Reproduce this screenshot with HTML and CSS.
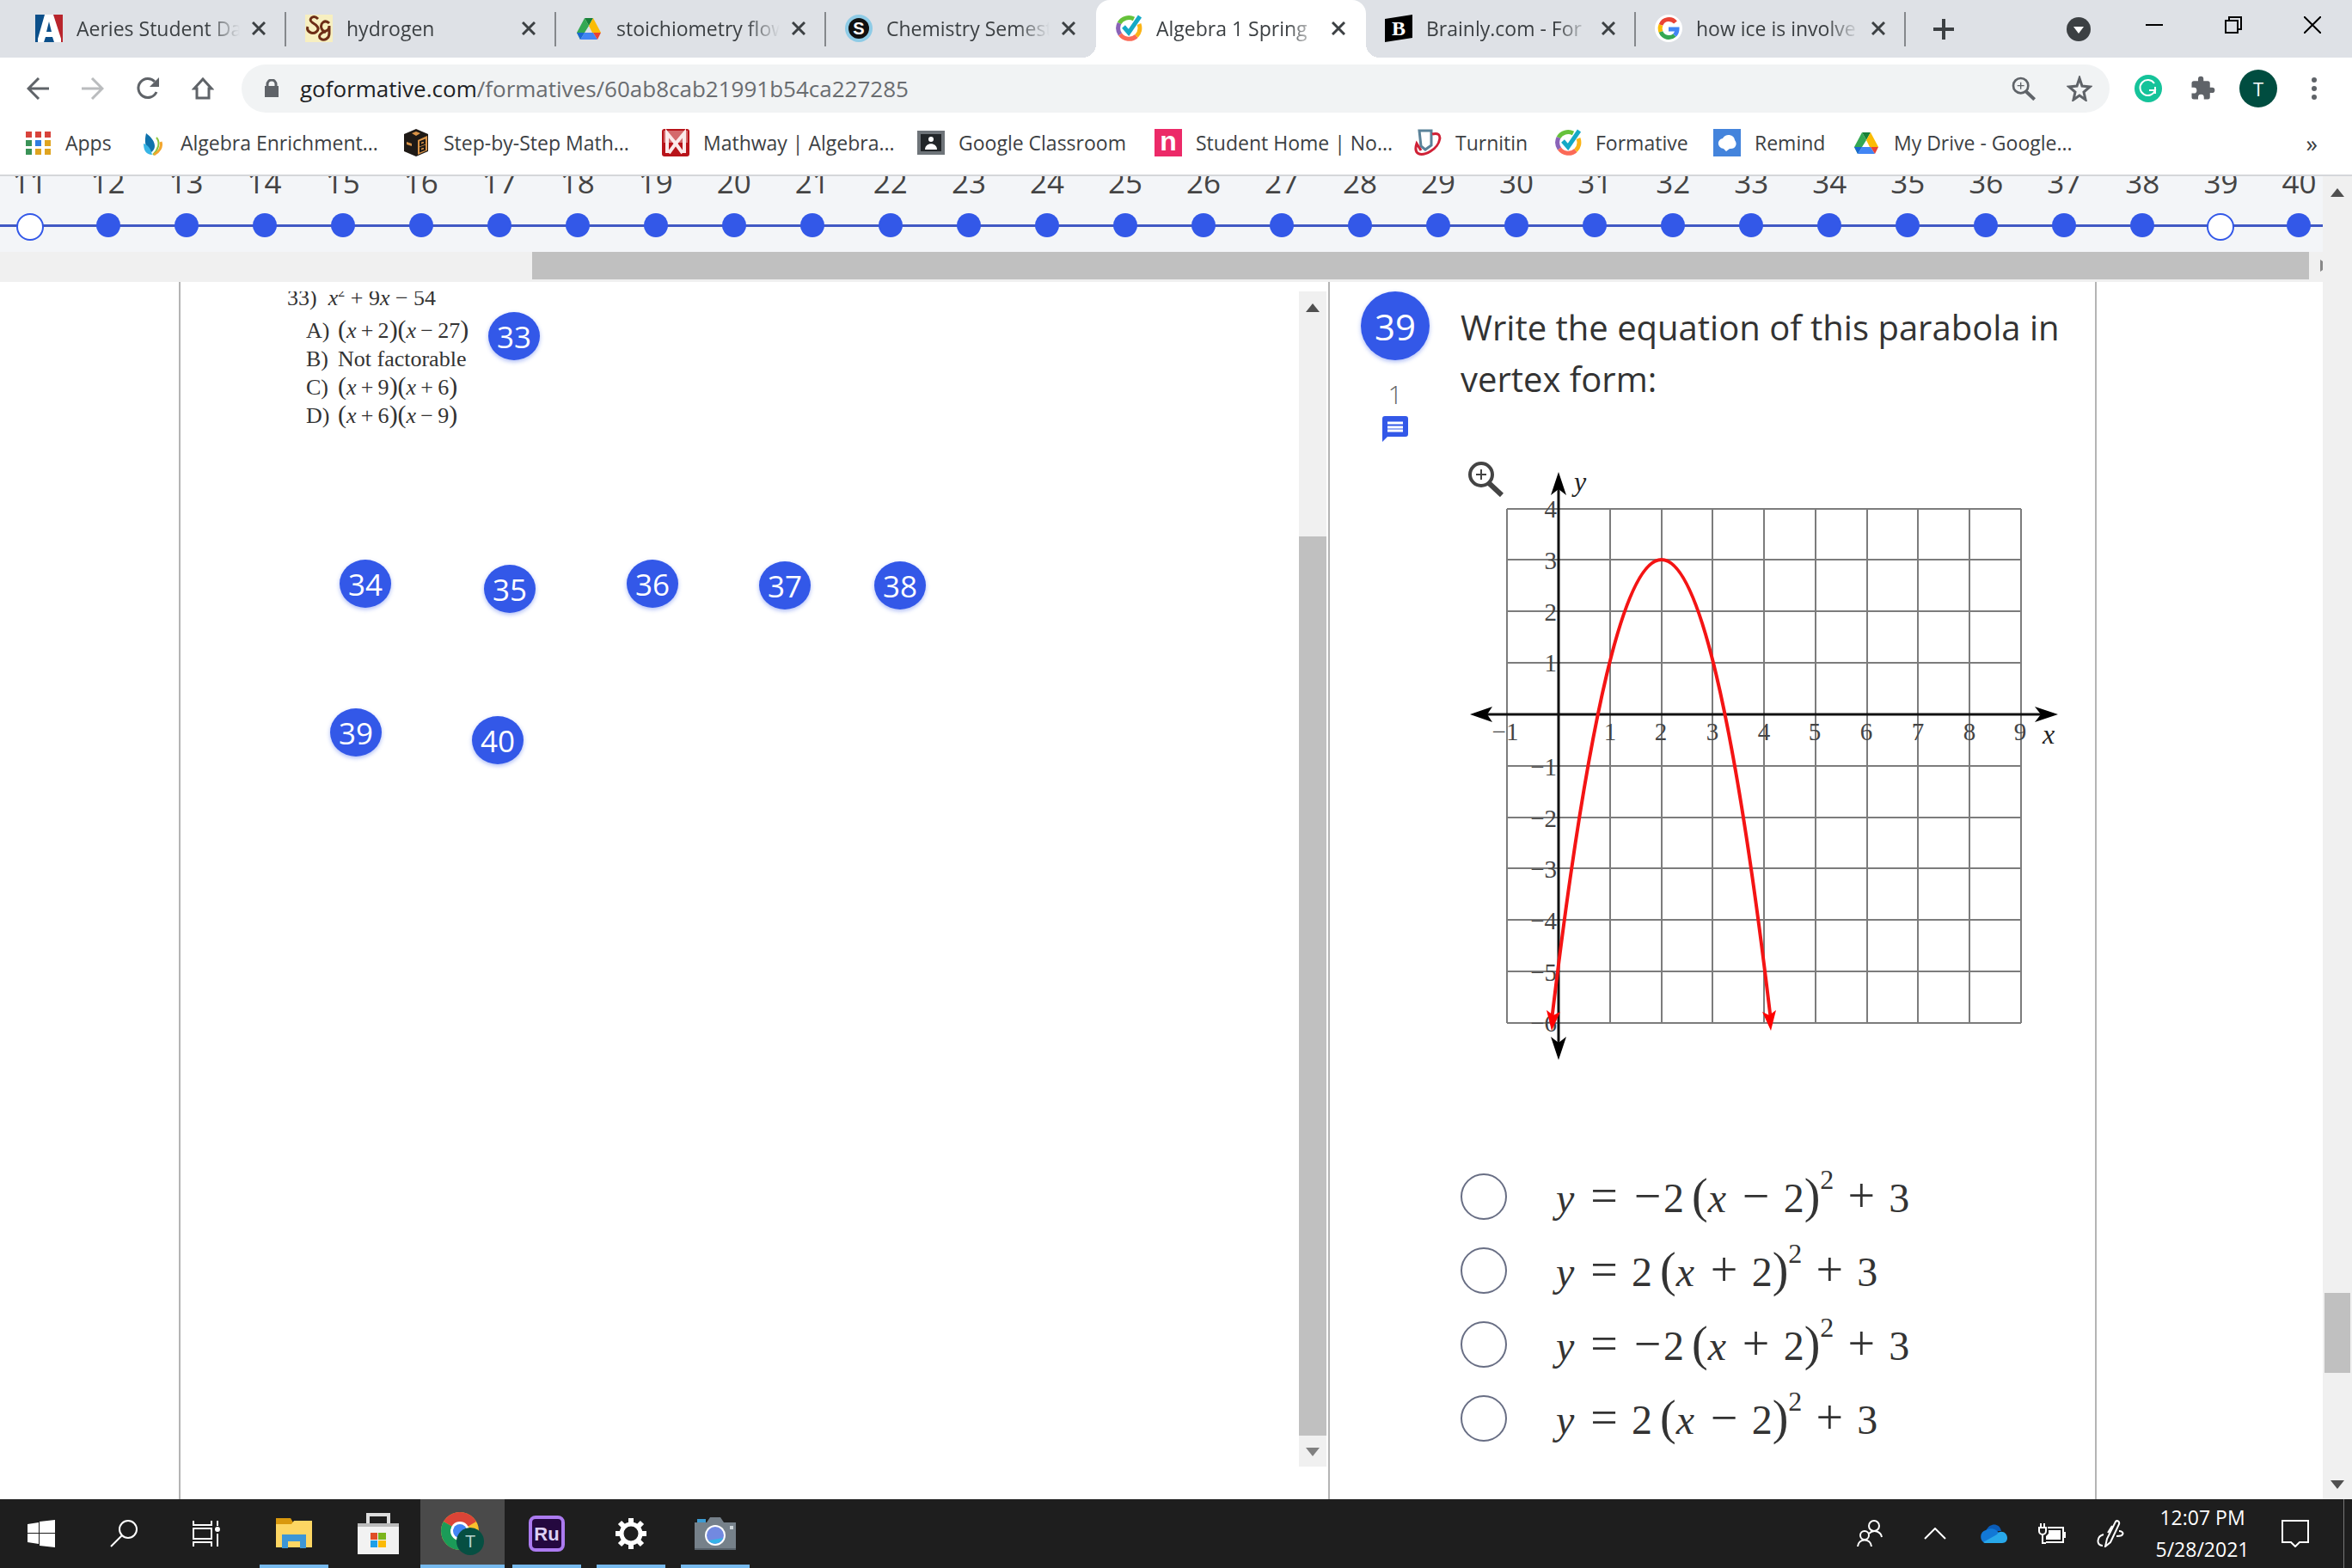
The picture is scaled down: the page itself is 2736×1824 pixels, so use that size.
FILE: index.html
```html
<!DOCTYPE html>
<html lang="en">
<head>
<meta charset="utf-8">
<title>Algebra 1 Spring</title>
<link rel="stylesheet" href="styles.css">
</head>
<body>
<svg class="defs" aria-hidden="true">
  <symbol id="close" viewBox="0 0 16 16"><path d="M1 1l14 14M15 1L1 15" stroke="#3c4043" stroke-width="3" fill="none"/></symbol>
  <symbol id="drive" viewBox="0 0 32 32">
    <path d="M11 4h10l-5 9z" fill="#188038"/><path d="M11 4L2 21l4 8 10-16z" fill="#34a853"/>
    <path d="M21 4l9 17H20L16 13z" fill="#fbbc04"/><path d="M2 21h9l-5 8z" fill="#1967d2"/>
    <path d="M11 21h10l5 8H6z" fill="#4285f4"/><path d="M21 21h9l-4 8z" fill="#ea4335"/>
  </symbol>
  <symbol id="formative" viewBox="0 0 32 32">
    <g fill="none" stroke-width="5"><path d="M5 10a13 13 0 0 1 17-5" stroke="#66c23a"/><path d="M6 23A13 13 0 0 1 5 10" stroke="#8a63b8"/><path d="M25 25a13 13 0 0 1-19-2" stroke="#fb6a57"/><path d="M28 11a13 13 0 0 1-3 14" stroke="#fbb416"/><path d="M10 14l6 7L29 2" stroke="#14a9c6"/></g>
  </symbol>
  <symbol id="zoom" viewBox="0 0 42 42"><circle cx="16" cy="16" r="13" fill="none" stroke="currentColor" stroke-width="4"/><path d="M25 26l15 14" stroke="currentColor" stroke-width="6"/><path d="M16 10v12M10 16h12" stroke="currentColor" stroke-width="2"/></symbol>
</svg>

<header class="browser">
  <div class="tabstrip">
    <div class="tab"><svg class="icon" viewBox="0 0 32 32"><path d="M0 0h32v32H0z" fill="#0b4f8a"/><path d="M21 0h11v32h-3z" fill="#b9252c"/><path d="M11 0h10l9 28v4h-8l-2-6h-8l-2 6H3v-4z" fill="#fff"/><path d="M16 8l3 12h-6z" fill="#0b4f8a"/></svg><span class="tab-title">Aeries Student Da</span><button class="tab-close" aria-label="Close tab"><svg viewBox="0 0 16 16"><use href="#close"/></svg></button></div>
    <div class="tab"><svg class="icon" viewBox="0 0 32 32"><path fill="#f7efc0" d="M0 0h32v32H0z"/><g fill="none" stroke="#6d2d16" stroke-width="3"><path d="M15 5C9-1 3 6 8 9s10 7 5 11S1 19 3 14"/><path d="M28 10c-5-5-11 0-9 6s9 3 9-3v9c0 6-6 9-10 6s1-8 6-8"/></g></svg><span class="tab-title">hydrogen</span><button class="tab-close" aria-label="Close tab"><svg viewBox="0 0 16 16"><use href="#close"/></svg></button></div>
    <div class="tab"><svg class="icon"><use href="#drive"/></svg><span class="tab-title">stoichiometry flow</span><button class="tab-close" aria-label="Close tab"><svg viewBox="0 0 16 16"><use href="#close"/></svg></button></div>
    <div class="tab bare"><svg class="icon" viewBox="0 0 32 32"><circle cx="16" cy="16" r="16" fill="#8ecbe6"/><circle cx="16" cy="16" r="12" fill="#111"/><text x="16" y="23" text-anchor="middle" class="mark" font-size="20" fill="#fff">S</text></svg><span class="tab-title">Chemistry Semest</span><button class="tab-close" aria-label="Close tab"><svg viewBox="0 0 16 16"><use href="#close"/></svg></button></div>
    <div class="tab bare active"><svg class="icon"><use href="#formative"/></svg><span class="tab-title">Algebra 1 Spring</span><button class="tab-close" aria-label="Close tab"><svg viewBox="0 0 16 16"><use href="#close"/></svg></button></div>
    <div class="tab"><svg class="icon" viewBox="0 0 32 32"><path d="M0 5l32-5v27L0 32z"/><text x="16" y="24" text-anchor="middle" class="mark slab" font-size="24" fill="#fff">B</text></svg><span class="tab-title">Brainly.com - For</span><button class="tab-close" aria-label="Close tab"><svg viewBox="0 0 16 16"><use href="#close"/></svg></button></div>
    <div class="tab"><svg class="icon" viewBox="0 0 32 32"><circle cx="16" cy="16" r="16" fill="#fff"/><g fill="none" stroke-width="5"><path d="M24 9A10 10 0 0 0 7 12" stroke="#ea4335"/><path d="M7 12a10 10 0 0 0 0 8" stroke="#fbbc05"/><path d="M7 20a10 10 0 0 0 16 4" stroke="#34a853"/><path d="M23 24a10 10 0 0 0 3-7H16" stroke="#4285f4"/></g></svg><span class="tab-title">how ice is involve</span><button class="tab-close" aria-label="Close tab"><svg viewBox="0 0 16 16"><use href="#close"/></svg></button></div>
    <button class="newtab" aria-label="New tab"><svg viewBox="0 0 24 24" width="24" height="24"><path d="M12 0v24M0 12h24" stroke="#3c4043" stroke-width="4"/></svg></button>
    <div class="window-controls">
      <button aria-label="Search tabs"><svg width="28" height="28" viewBox="0 0 28 28"><circle cx="14" cy="14" r="14" fill="#3c4043"/><path d="M8 11h12l-6 8z" fill="#fff"/></svg></button>
      <button aria-label="Minimize"><svg width="20" height="20" viewBox="0 0 20 20"><path d="M0 10h20" stroke="#000" stroke-width="2"/></svg></button>
      <button aria-label="Restore"><svg width="20" height="20" viewBox="0 0 20 20"><path d="M1 5h14v14H1zM5 5V1h14v14h-4" fill="none" stroke="#000" stroke-width="2"/></svg></button>
      <button aria-label="Close"><svg width="20" height="20" viewBox="0 0 20 20"><path d="M0 0l20 20M20 0L0 20" stroke="#000" stroke-width="2"/></svg></button>
    </div>
  </div>

  <div class="toolbar">
    <button class="nav" aria-label="Back"><svg width="26" height="26" viewBox="0 0 26 26"><path d="M26 13H3M14 1L2 13l12 12" fill="none" stroke="#5f6368" stroke-width="3"/></svg></button>
    <button class="nav" aria-label="Forward"><svg width="26" height="26" viewBox="0 0 26 26"><path d="M0 13h23M12 1l12 12-12 12" fill="none" stroke="#babcbe" stroke-width="3"/></svg></button>
    <button class="nav" aria-label="Reload"><svg width="28" height="28" viewBox="0 0 28 28"><path d="M24 18A11 11 0 1 1 22 6" fill="none" stroke="#5f6368" stroke-width="3"/><path d="M27 1v11H16z" fill="#5f6368"/></svg></button>
    <button class="nav" aria-label="Home"><svg width="26" height="26" viewBox="0 0 26 26"><path d="M13 2L3 13h3v11h14V13h3z" fill="none" stroke="#5f6368" stroke-width="3"/></svg></button>
    <div class="omnibox">
      <svg width="18" height="22" viewBox="0 0 18 22"><path d="M1 8h16v13H1z" fill="#5f6368"/><path d="M4 8V6a5 5 0 0 1 10 0v2" fill="none" stroke="#5f6368" stroke-width="3"/></svg>
      <div class="url"><span class="host">goformative.com</span>/formatives/60ab8cab21991b54ca227285</div>
      <button aria-label="Zoom"><svg width="28" height="28" viewBox="0 0 42 42"><use href="#zoom"/></svg></button>
      <button aria-label="Bookmark this page"><svg width="30" height="30" viewBox="0 0 30 30"><path d="M15 3l3 9 9 1-7 6 2 9-7-5-7 5 2-9-7-6 9-1z" fill="none" stroke="#5f6368" stroke-width="3"/></svg></button>
    </div>
    <div class="extensions">
      <button aria-label="Grammarly"><svg width="32" height="32" viewBox="0 0 32 32"><circle cx="16" cy="16" r="16" fill="#15c39a"/><path d="M23 10a9 9 0 1 0 1 8h-7M24 14v8" fill="none" stroke="#fff" stroke-width="2"/></svg></button>
      <button aria-label="Extensions"><svg width="30" height="30" viewBox="0 0 24 24"><path fill="#5f6368" d="M21 11h-2V7a2 2 0 0 0-2-2h-4V3a2.500 2.500 0 0 0-5 0v2H4a2 2 0 0 0-2 2v4h2a2.700 2.700 0 0 1 0 5.400H2V20a2 2 0 0 0 2 2h4v-2a2.700 2.700 0 0 1 5.400 0v2H17a2 2 0 0 0 2-2v-4h2a2.500 2.500 0 0 0 0-5z"/></svg></button>
      <button class="avatar">T</button>
      <button aria-label="Menu"><svg width="6" height="26" viewBox="0 0 6 26" fill="#5f6368"><circle cx="3" cy="3" r="3"/><circle cx="3" cy="13" r="3"/><circle cx="3" cy="23" r="3"/></svg></button>
    </div>
  </div>

  <nav class="bookmarks">
    <a href="#"><svg class="icon" viewBox="0 0 32 32"><path fill="#d8433b" d="M2 3h7v7H2zM13 3h7v7h-7zM24 3h7v7h-7z"/><path fill="#3a9257" d="M2 13h7v7H2zM2 23h7v7H2z"/><path fill="#2f7de1" d="M13 13h7v7h-7z"/><path fill="#dfa420" d="M24 13h7v7h-7zM13 23h7v7h-7zM24 23h7v7h-7z"/></svg>Apps</a>
    <a href="#"><svg class="icon" viewBox="0 0 32 32"><path d="M8 5c12 9 12 18 6 22C6 22 6 14 8 5z" fill="#0e72ac"/><path d="M5 17c6 2 8 6 10 13-7 0-10-5-10-13z" fill="#38b5e6"/><path d="M20 10c5 6 2 14-4 20" fill="none" stroke="#8cc63f" stroke-width="2"/><path d="M25 15c2 6-2 12-8 15" fill="none" stroke="#f3a62d" stroke-width="3"/></svg>Algebra Enrichment...</a>
    <a href="#"><svg class="icon" viewBox="0 0 32 32"><path d="M16 0l14 6v20l-14 6-14-6V6z" fill="#1f1a16"/><path d="M18 13l11-5v17l-11 5zM11 5l5-2 5 2-5 3z" fill="#d99347"/><path d="M5 15l6 2v3l-6-2z" fill="#d99347"/><path d="M21 15l5-2v4l-5 2zM21 22l5-2v4l-5 2z" fill="#d99347" stroke="#1f1a16" stroke-width="2"/></svg>Step-by-Step Math...</a>
    <a href="#"><svg class="icon" viewBox="0 0 32 32"><rect width="32" height="32" rx="3" fill="#b8141a"/><path d="M2 2h28v14H2z" fill="#d46a6c"/><path d="M6 28V5l10 12L26 5v23M8 28l8-11 8 11" fill="none" stroke="#fbeaea" stroke-width="4"/></svg>Mathway | Algebra...</a>
    <a href="#"><svg class="icon" viewBox="0 0 32 32"><path fill="#6e7479" d="M0 2h32v28H0z"/><path fill="#222629" d="M4 6h24v20H4z"/><circle cx="16" cy="12" r="3" fill="#fff"/><path d="M9 24c0-9 14-9 14 0z" fill="#fff"/></svg>Google Classroom</a>
    <a href="#"><svg class="icon" viewBox="0 0 32 32"><path fill="#ec2a68" d="M0 0h32v32H0z"/><text x="16" y="25" text-anchor="middle" class="mark" font-size="32" fill="#fff">n</text></svg>Student Home | No...</a>
    <a href="#"><svg class="icon" viewBox="0 0 32 32"><path d="M6 2h14v17l-7 5-5-4z" fill="none" stroke="#5a8299" stroke-width="3"/><path d="M21 6c14-4 10 13-2 20S-1 29 3 17l5 8" fill="none" stroke="#cf2136" stroke-width="3"/></svg>Turnitin</a>
    <a href="#"><svg class="icon"><use href="#formative"/></svg>Formative</a>
    <a href="#"><svg class="icon" viewBox="0 0 32 32"><path fill="#4484dc" d="M0 0h32v32H0z"/><path d="M12 23c-8-1-8-11-1-12 3-6 13-5 14 2 4 5 0 11-6 10l-4 3z" fill="#fff"/></svg>Remind</a>
    <a href="#"><svg class="icon"><use href="#drive"/></svg>My Drive - Google...</a>
    <button class="more" aria-label="More bookmarks">»</button>
  </nav>
</header>

<main class="page">
  <div class="content">
    <ol class="progress">
      <li class="open">11</li><li>12</li><li>13</li><li>14</li><li>15</li><li>16</li><li>17</li><li>18</li><li>19</li><li>20</li><li>21</li><li>22</li><li>23</li><li>24</li><li>25</li><li>26</li><li>27</li><li>28</li><li>29</li><li>30</li><li>31</li><li>32</li><li>33</li><li>34</li><li>35</li><li>36</li><li>37</li><li>38</li><li class="open">39</li><li>40</li>
    </ol>
    <div class="hscroll"><div class="hthumb"></div><svg width="3" height="14" viewBox="0 0 3 14"><path d="M0 0l3 2v10l-3 2z" fill="#888"/></svg></div>

    <div class="panels">
      <section class="worksheet">
        <div class="sheet">
          <div class="problem">
            <p class="stem">33)&nbsp; <i>x</i><sup>2</sup> + 9<i>x</i> − 54</p>
            <dl>
              <dt>A)</dt><dd><b>(</b><i>x</i>&thinsp;+&thinsp;2<b>)(</b><i>x</i>&thinsp;−&thinsp;27<b>)</b></dd>
              <dt>B)</dt><dd>Not factorable</dd>
              <dt>C)</dt><dd><b>(</b><i>x</i>&thinsp;+&thinsp;9<b>)(</b><i>x</i>&thinsp;+&thinsp;6<b>)</b></dd>
              <dt>D)</dt><dd><b>(</b><i>x</i>&thinsp;+&thinsp;6<b>)(</b><i>x</i>&thinsp;−&thinsp;9<b>)</b></dd>
            </dl>
          </div>
          <button class="pin p33">33</button>
          <button class="pin p34">34</button>
          <button class="pin p35">35</button>
          <button class="pin p36">36</button>
          <button class="pin p37">37</button>
          <button class="pin p38">38</button>
          <button class="pin p39">39</button>
          <button class="pin p40">40</button>
        </div>
        <div class="vscroll inner">
          <svg width="16" height="10" viewBox="0 0 16 10"><path d="M0 10L8 0l8 10z" fill="#505050"/></svg>
          <div class="space-inner"></div><div class="thumb-inner"></div>
          <svg width="16" height="10" viewBox="0 0 16 10"><path d="M0 0h16L8 10z" fill="#808080"/></svg>
        </div>
      </section>

      <section class="question">
        <div class="meta">
          <span class="badge">39</span>
          <span class="points">1</span>
          <button aria-label="Comments"><svg width="30" height="30" viewBox="0 0 30 30"><path d="M3 0h24a3 3 0 0 1 3 3v18a3 3 0 0 1-3 3H6l-6 6V3a3 3 0 0 1 3-3z" fill="#3358e8"/><path d="M6 8h18M6 13h18M6 17h18" stroke="#fff" stroke-width="3"/></svg></button>
        </div>
        <div class="body">
          <h1>Write the equation of this parabola in vertex form:</h1>
          <svg class="graph" viewBox="0 0 710 710" role="img" aria-label="Graph of a downward parabola with vertex (2, 3)">
            <g class="grid">
              <path d="M54 53v598M114 53v598M174 53v598M234 53v598M293 53v598M353 53v598M413 53v598M473 53v598M532 53v598M592 53v598M652 53v598"/>
              <path d="M54 53h598M54 112h598M54 172h598M54 232h598M54 292h598M54 352h598M54 412h598M54 471h598M54 531h598M54 591h598M54 651h598"/>
            </g>
            <path d="M114 24v660M24 292h660" stroke="#111" stroke-width="3"/>
            <path d="M114 10l9 27-9-7-9 7zM114 694l9-27-9 7-9-7zM11 292l26-9-6 9 6 9zM695 292l-27-9 7 9-7 9z"/>
            <g class="ticks" text-anchor="end">
              <text x="112" y="63">4</text><text x="112" y="123">3</text><text x="112" y="183">2</text><text x="112" y="242">1</text>
              <text x="112" y="363">−1</text><text x="112" y="423">−2</text><text x="112" y="482">−3</text><text x="112" y="542">−4</text><text x="112" y="602">−5</text><text x="112" y="661">−6</text>
            </g>
            <g class="ticks" text-anchor="middle">
              <text x="52" y="322">−1</text><text x="174" y="322">1</text><text x="233" y="322">2</text><text x="293" y="322">3</text><text x="353" y="322">4</text><text x="412" y="322">5</text><text x="472" y="322">6</text><text x="532" y="322">7</text><text x="592" y="322">8</text><text x="651" y="322">9</text>
            </g>
            <text class="axis" x="132" y="32">y</text><text class="axis" x="677" y="326">x</text>
            <path d="M106 648Q234 -424 361 648" fill="none" stroke="#f41414" stroke-width="4"/>
            <path d="M106 660l-6-24 8 6 8-4zM361 660l-10-22 8 4 8-6z" fill="#f00"/>
            <svg x="8" y="-3" width="42" height="42" viewBox="0 0 42 42" color="#444"><use href="#zoom"/></svg>
          </svg>
          <form class="choices">
            <label><input type="radio" name="answer"><span class="math"><i>y</i><span class="op">=</span><span class="neg">−</span>2<span class="paren gap">(</span><i>x</i><span class="op">−</span>2<span class="paren">)</span><sup>2</sup><span class="op">+</span>3</span></label>
            <label><input type="radio" name="answer"><span class="math"><i>y</i><span class="op">=</span>2<span class="paren gap">(</span><i>x</i><span class="op">+</span>2<span class="paren">)</span><sup>2</sup><span class="op">+</span>3</span></label>
            <label><input type="radio" name="answer"><span class="math"><i>y</i><span class="op">=</span><span class="neg">−</span>2<span class="paren gap">(</span><i>x</i><span class="op">+</span>2<span class="paren">)</span><sup>2</sup><span class="op">+</span>3</span></label>
            <label><input type="radio" name="answer"><span class="math"><i>y</i><span class="op">=</span>2<span class="paren gap">(</span><i>x</i><span class="op">−</span>2<span class="paren">)</span><sup>2</sup><span class="op">+</span>3</span></label>
          </form>
        </div>
      </section>
    </div>
  </div>
  <div class="vscroll outer">
    <svg width="16" height="10" viewBox="0 0 16 10"><path d="M0 10L8 0l8 10z" fill="#505050"/></svg>
    <div class="space-top"></div><div class="thumb"></div><div class="space-bottom"></div>
    <svg width="16" height="10" viewBox="0 0 16 10"><path d="M0 0h16L8 10z" fill="#505050"/></svg>
  </div>
</main>

<footer class="taskbar">
  <div class="system">
    <button aria-label="Start"><svg width="32" height="32" viewBox="0 0 32 32"><path d="M0 5l13-2v12H0zM14 2l18-2v15H14zM0 16h13v12L0 26zM14 16h18v16l-18-2z" fill="#fff"/></svg></button>
    <button aria-label="Search"><svg width="32" height="32" viewBox="0 0 32 32"><circle cx="21" cy="11" r="10" fill="none" stroke="#fff" stroke-width="2"/><path d="M14 18L1 31" stroke="#fff" stroke-width="2"/></svg></button>
    <button aria-label="Task view"><svg width="32" height="32" viewBox="0 0 32 32"><path d="M1 1v5h21V1M1 10h21v12H1zM1 31v-5h21v5M29 1v6M29 16v15" fill="none" stroke="#fff" stroke-width="2"/><circle cx="29" cy="11" r="3" fill="#fff"/></svg></button>
  </div>
  <div class="apps">
    <button class="running" aria-label="File Explorer"><svg width="42" height="36" viewBox="0 0 42 36"><path d="M0 0h17l3 5v5H0z" fill="#d9980d"/><path d="M0 7h18l3-4h21v31H0z" fill="#fdd663"/><path d="M7 35V19h28v16h-7v-8H14v8z" fill="#3d96d6"/></svg></button>
    <button aria-label="Microsoft Store"><svg width="48" height="48" viewBox="0 0 48 48"><path d="M12 16V2h24v14" fill="none" stroke="#ddd" stroke-width="4"/><path d="M0 12h48v36H0z" fill="#f2f2f2"/><path d="M0 12h48v4H0z" fill="#bbb"/><path fill="#e04e26" d="M15 23h8v8h-8z"/><path fill="#7bb51c" d="M24 23h9v8h-9z"/><path fill="#1e9fe8" d="M15 32h8v8h-8z"/><path fill="#fbba08" d="M24 32h9v8h-9z"/></svg></button>
    <button class="running current" aria-label="Google Chrome"><svg width="50" height="50" viewBox="0 0 50 50"><circle cx="22" cy="22" r="22" fill="#fbc02d"/><path d="M22 22L3 11a22 22 0 0 1 38 0z" fill="#dc4437"/><path d="M3 11a22 22 0 0 0 19 33l9-17z" fill="#1b9b58"/><circle cx="22" cy="22" r="11" fill="#fff"/><circle cx="22" cy="22" r="8" fill="#4285f4"/><circle cx="34" cy="34" r="16" fill="#064f42"/><text x="34" y="41" text-anchor="middle" class="mark thin" font-size="20" fill="#b8d4cf">T</text></svg></button>
    <button class="running" aria-label="Adobe Rush"><svg width="42" height="42" viewBox="0 0 42 42"><rect x="2" y="2" width="38" height="38" rx="6" fill="#24083f" stroke="#ac7bf0" stroke-width="4"/><text x="21" y="29" text-anchor="middle" class="mark" font-size="22" fill="#ddd0f5">Ru</text></svg></button>
    <button class="running" aria-label="Settings"><svg width="36" height="36" viewBox="0 0 36 36"><circle cx="18" cy="18" r="11" fill="none" stroke="#fff" stroke-width="5"/><path d="M18 0v7M18 29v7M0 18h7M29 18h7M5 5l5 5M26 26l5 5M5 31l5-5M26 10l5-5" stroke="#fff" stroke-width="6"/></svg></button>
    <button class="running" aria-label="Camera"><svg width="48" height="38" viewBox="0 0 48 38"><path d="M0 6h14l4-6h12l4 6h14v32H0z" fill="#76818a"/><path d="M0 36h48v2H0z" fill="#59636b"/><path d="M3 2h10v4H3z" fill="#3c9bd2"/><circle cx="24" cy="21" r="12" fill="#fff"/><circle cx="24" cy="21" r="10" fill="#7289e0"/><path d="M16 27a10 10 0 0 0 17-3z" fill="#35b3e8"/><path d="M41 10h4v4h-4z" fill="#cfd6da"/></svg></button>
  </div>
  <div class="tray">
    <button class="people" aria-label="People"><svg width="30" height="32" viewBox="0 0 30 32"><g fill="none" stroke="#fff" stroke-width="2"><circle cx="20" cy="7" r="6"/><circle cx="9" cy="18" r="5"/><path d="M1 31c1-10 15-10 16 0M14 16c6-6 14-2 15 4"/></g></svg></button>
    <button aria-label="Show hidden icons"><svg width="26" height="14" viewBox="0 0 26 14"><path d="M1 13L13 1l12 12" fill="none" stroke="#fff" stroke-width="2"/></svg></button>
    <button aria-label="OneDrive"><svg width="32" height="22" viewBox="0 0 32 22"><path d="M7 8c4-10 16-10 18 0z" fill="#0a5cb8"/><path d="M6 22A8 8 0 0 1 7 7c8-4 14 0 16 5l-9 10z" fill="#1278d6"/><path d="M4 21l16-9c3-6 12-3 12 4 0 3-2 6-6 6H6z" fill="#28a8ea"/></svg></button>
    <button aria-label="Battery"><svg width="32" height="24" viewBox="0 0 32 24"><g fill="none" stroke="#fff" stroke-width="2"><path d="M3 0v5M7 0v5M1 5h8v4a4 4 0 0 1-8 0zM5 13v10h4M11 5h18v17H9"/></g><path d="M12 8h14v11H9v-4l3-3zM30 10h2v7h-2z" fill="#fff"/></svg></button>
    <button aria-label="Windows Ink"><svg width="32" height="32" viewBox="0 0 32 32"><g fill="none" stroke="#fff" stroke-width="2"><path d="M10 31l2-9L22 2c2-2 5 0 4 3L16 26zM18 7l-5 8M8 17c-8 2-9 13-1 13M26 13c6 0 7 6-3 6"/></g></svg></button>
    <div class="clock"><time>12:07 PM</time><time>5/28/2021</time></div>
    <button class="notices" aria-label="Notifications"><svg width="32" height="32" viewBox="0 0 32 32"><path d="M1 1h30v25H21l-5 5-5-5H1z" fill="none" stroke="#fff" stroke-width="2"/></svg></button>
  </div>
</footer>
</body>
</html>
```
FILE: styles.css
```css
* { box-sizing: border-box; }
body {
  margin: 0;
  min-height: 100vh;
  display: flex;
  flex-direction: column;
  font-family: "Open Sans", "Noto Sans", sans-serif;
  background: #fff;
  color: #3c4043;
}
button {
  margin: 0;
  padding: 0;
  border: 0;
  background: none;
  color: inherit;
  font: inherit;
  display: flex;
  align-items: center;
  justify-content: center;
}
svg { display: block; flex: none; }
.defs { position: absolute; width: 0; height: 0; }
.icon { width: 32px; height: 32px; flex: none; }
.mark { font-family: "Liberation Sans", sans-serif; font-weight: 700; }
.slab { font-family: "Liberation Serif", serif; }
.thin { font-weight: 400; }

/* Tab strip */
.tabstrip {
  display: flex;
  height: 67px;
  padding-left: 19px;
  background: #dee1e6;
}
.tab {
  position: relative;
  width: 314px;
  flex: none;
  display: flex;
  align-items: center;
  padding: 0 24px 2px 22px;
  font-size: 23px;
}
.tab::after {
  content: "";
  position: absolute;
  right: 0;
  top: 14px;
  width: 2px;
  height: 40px;
  background: #85888c;
}
.tab.bare::after { display: none; }
.tab.active { background: #fff; border-radius: 16px 16px 0 0; }
.tab.active::before {
  content: "";
  position: absolute;
  left: -16px;
  right: -16px;
  bottom: 0;
  height: 16px;
  background:
    radial-gradient(circle at 0 0, #dee1e6 16px, #fff 16px) left / 16px 16px no-repeat,
    radial-gradient(circle at 100% 0, #dee1e6 16px, #fff 16px) right / 16px 16px no-repeat;
}
.tab-title {
  flex: 1;
  min-width: 0;
  margin: 0 14px 0 16px;
  overflow: hidden;
  white-space: nowrap;
  -webkit-mask-image: linear-gradient(to right, #000 80%, transparent);
  mask-image: linear-gradient(to right, #000 80%, transparent);
}
.tab-close svg { width: 16px; height: 16px; }
.newtab { width: 88px; }
.window-controls { margin-left: auto; display: flex; }
.window-controls button { width: 92px; padding-bottom: 10px; }
.window-controls button:first-child { width: 84px; padding-bottom: 0; }

/* Address row */
.toolbar { display: flex; align-items: center; height: 72px; padding: 0 41px 0 12px; }
.nav { width: 64px; height: 64px; }
.omnibox {
  flex: 1;
  height: 56px;
  margin-left: 13px;
  padding: 0 20px 0 26px;
  border-radius: 28px;
  background: #f1f3f4;
  color: #5f6368;
  display: flex;
  align-items: center;
  gap: 36px;
}
.url { flex: 1; margin-left: -12px; font-size: 26px; color: #696c70; }
.host { color: #202124; }
.extensions { display: flex; align-items: center; gap: 32px; margin-left: 29px; }
.extensions button:last-child { margin-left: 8px; }
.avatar {
  width: 44px;
  height: 44px;
  margin-left: -4px;
  border-radius: 50%;
  background: #004d40;
  color: #fff;
  font-size: 22px;
}

/* Bookmarks */
.bookmarks {
  display: grid;
  grid-template-columns: 134px 306px 302px 297px 276px 302px 163px 185px 162px 1fr auto;
  align-items: center;
  height: 66px;
  padding: 0 40px 10px 28px;
  border-bottom: 2px solid #d5d7da;
  font-size: 23px;
}
.bookmarks a {
  display: flex;
  align-items: center;
  gap: 16px;
  color: #3c4043;
  text-decoration: none;
  white-space: nowrap;
}
.more { font-size: 27px; }

/* Page */
.page { flex: 1; display: flex; }
.content { flex: 1; min-width: 0; display: flex; flex-direction: column; overflow: hidden; }
.progress {
  list-style: none;
  margin: 0 -18px 0 -11px;
  padding: 0;
  height: 88px;
  display: flex;
  background: #f3f5f8;
  overflow: hidden;
}
.progress li {
  flex: 1;
  margin-top: -21px;
  font-size: 35px;
  line-height: 56px;
  text-align: center;
  color: #444;
  background: linear-gradient(#4058c4, #4058c4) 0 77px / 100% 3px no-repeat;
}
.progress li::after {
  content: "";
  display: block;
  width: 28px;
  height: 28px;
  margin: 8px auto 0;
  border-radius: 50%;
  background: #3358e8;
}
.progress .open::after { background: #fff; border: 2px solid #3358e8; }
.hscroll {
  display: flex;
  align-items: center;
  justify-content: space-between;
  height: 35px;
  padding: 0 0 3px 619px;
  background: #f0f0f0;
}
.hthumb { flex: 1; margin-right: 13px; height: 32px; background: #c0c0c0; }

.panels { flex: 1; display: grid; grid-template-columns: 1337fr 894fr; margin: 0 263px 0 208px; }
.worksheet {
  display: flex;
  padding: 11px 2px 38px 0;
  border-left: 2px solid #b4b4b4;
}
.sheet {
  position: relative;
  flex: 1;
  overflow: hidden;
}
.problem {
  margin: -9px 0 0 124px;
  font: 26px/33px "Liberation Serif", serif;
  color: #333;
}
.stem { margin: 0 0 5px; }
.stem sup { font-size: 16px; line-height: 0; }
.problem dl { margin: 0 0 0 22px; display: grid; grid-template-columns: 37px 1fr; }
.problem dd { margin: 0; }
.problem b { font-weight: 400; font-size: 30px; line-height: 0; }
.pin {
  position: absolute;
  width: 60px;
  height: 56px;
  border-radius: 50%;
  background: #3358e8;
  color: #fff;
  font-size: 35px;
  box-shadow: 0 2px 5px rgba(51, 88, 232, .4);
}
.p33 { left: 358px; top: 24px; }
.p34 { left: 185px; top: 312px; }
.p35 { left: 353px; top: 318px; }
.p36 { left: 519px; top: 312px; }
.p37 { left: 673px; top: 314px; }
.p38 { left: 807px; top: 314px; }
.p39 { left: 174px; top: 485px; }
.p40 { left: 339px; top: 494px; }

.vscroll { display: flex; flex-direction: column; align-items: center; background: #f0f0f0; }
.inner { width: 32px; padding: 14px 0 12px; }
.space-inner { flex: 261; }
.thumb-inner { flex: 1046; width: 100%; margin-bottom: 14px; background: #c0c0c0; }
.outer { width: 34px; padding: 14px 0 12px; }
.space-top { flex: 1275; }
.thumb { flex: 93; width: 30px; background: #c0c0c0; }
.space-bottom { flex: 125; }

.question {
  display: flex;
  align-items: flex-start;
  border: solid #b4b4b4;
  border-width: 0 2px;
}
.meta {
  width: 152px;
  padding-top: 11px;
  display: flex;
  flex-direction: column;
  align-items: center;
}
.badge {
  width: 80px;
  height: 80px;
  border-radius: 50%;
  background: #3358e8;
  color: #fff;
  font-size: 42px;
  line-height: 82px;
  text-align: center;
  box-shadow: 0 2px 5px rgba(51, 88, 232, .4);
}
.points { margin: 20px 0 5px; font-size: 30px; line-height: 40px; font-weight: 300; color: #666; }
.body { flex: 1; min-width: 0; }
h1 {
  margin: 23px 0 68px;
  padding-right: 30px;
  font-size: 40px;
  font-weight: 400;
  line-height: 60px;
  color: #333;
}
.graph { width: 710px; height: 710px; overflow: visible; }
.grid { fill: none; stroke: #7c7c7c; stroke-width: 2; }
.ticks { font: 29px "Liberation Serif", serif; fill: #444; }
.axis { font: italic 32px "Liberation Serif", serif; fill: #222; }
.choices { margin-top: 116px; display: flex; flex-direction: column; gap: 32px; }
.choices label { display: flex; align-items: center; gap: 57px; height: 54px; }
.choices input {
  appearance: none;
  width: 54px;
  height: 54px;
  margin: 0;
  border: 2px solid #686e84;
  border-radius: 50%;
}
.math {
  display: flex;
  align-items: baseline;
  font: 48px/54px "Liberation Serif", serif;
  color: #333;
}
.math i { width: 24px; }
.math .op { width: 32px; margin: 0 16px; font-size: 56px; line-height: 54px; text-align: center; }
.math .neg { width: 37px; font-size: 56px; line-height: 54px; text-align: center; }
.math .paren { font-size: 56px; line-height: 54px; }
.math .gap { margin-left: 9px; }
.math sup { margin-top: -8px; font-size: 32px; line-height: 32px; align-self: flex-start; }

/* Taskbar */
.taskbar { display: flex; height: 80px; background: #1e1e1e; color: #fff; }
.system { display: flex; margin-right: 5px; }
.system button { width: 96px; }
.apps { display: flex; }
.apps button { width: 98px; background: linear-gradient(#76b9ed, #76b9ed) center bottom / 0 4px no-repeat; }
.apps .running { background-size: 80px 4px; }
.apps .current { background-color: #4a4a4a; background-size: 100% 4px; }
.tray {
  margin-left: auto;
  margin-right: 9px;
  padding-right: 40px;
  border-right: 1px solid #777;
  display: flex;
  align-items: center;
}
.tray button { width: 68px; }
.tray .people { margin-right: 8px; }
.clock {
  display: flex;
  flex-direction: column;
  align-items: center;
  width: 146px;
  font-size: 23px;
  line-height: 37px;
}
.tray .notices { width: 51px; justify-content: flex-end; }
```
